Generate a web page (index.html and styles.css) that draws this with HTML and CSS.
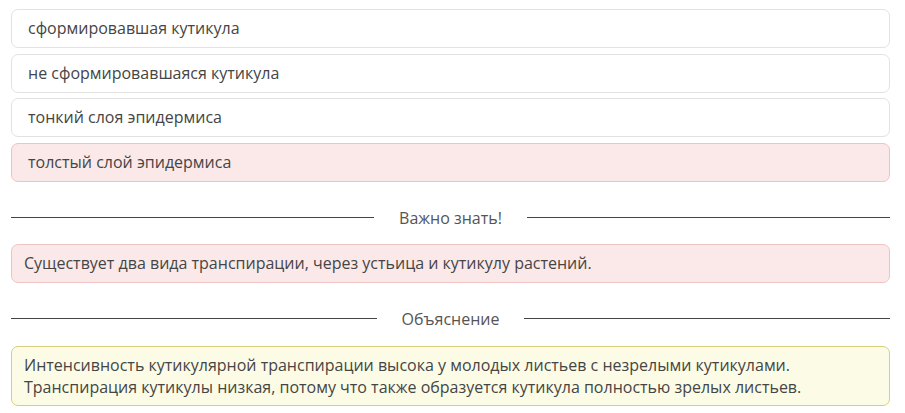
FILE: index.html
```html
<!DOCTYPE html>
<html lang="ru">
<head>
<meta charset="utf-8">
<link rel="stylesheet" href="styles.css">
</head>
<body>
<div class="page">
  <div class="options">
    <div class="option">сформировавшая кутикула</div>
    <div class="option">не сформировавшаяся кутикула</div>
    <div class="option">тонкий слоя эпидермиса</div>
    <div class="option option-wrong">толстый слой эпидермиса</div>
  </div>
  <div class="divider"><span class="divider-text">Важно знать!</span></div>
  <div class="note note-pink">Существует два вида транспирации, через устьица и кутикулу растений.</div>
  <div class="divider divider-second"><span class="divider-text">Объяснение</span></div>
  <div class="note note-yellow">Интенсивность кутикулярной транспирации высока у молодых листьев с незрелыми кутикулами.<br>Транспирация кутикулы низкая, потому что также образуется кутикула полностью зрелых листьев.</div>
</div>
</body>
</html>
```
FILE: styles.css
```css
html, body {
  margin: 0;
  padding: 0;
  background: #ffffff;
}
body {
  font-family: "Open Sans", "Noto Sans", sans-serif;
  font-size: 16px;
  color: #454545;
}
.page {
  padding: 9px 15px 0 11px;
}
.options {
  display: flex;
  flex-direction: column;
  gap: 5.5px;
}
.option {
  border: 1px solid #e2e2e2;
  border-radius: 7px;
  padding: 0 16px;
  height: 37px;
  line-height: 37px;
  background: #ffffff;
}
.option-wrong {
  background: #fbe9e9;
  border-color: #efc3c3;
}
.divider {
  display: flex;
  align-items: center;
  gap: 25px;
  height: 22px;
  margin: 25px 0 15px;
  color: #555555;
}
.divider-second {
  margin-bottom: 16.5px;
}
.divider::before,
.divider::after {
  content: "";
  flex: 1;
  border-top: 1px solid #444444;
}
.divider-text {
  line-height: 22px;
}
.note {
  border: 1px solid;
  border-radius: 7px;
  padding: 7px 12px;
  line-height: 22px;
}
.note-pink {
  background: #fbe9e9;
  border-color: #efc3c3;
  padding: 8px 12px;
  line-height: 21px;
}
.note-yellow {
  background: #fcfce6;
  border-color: #d6cf80;
}
```
